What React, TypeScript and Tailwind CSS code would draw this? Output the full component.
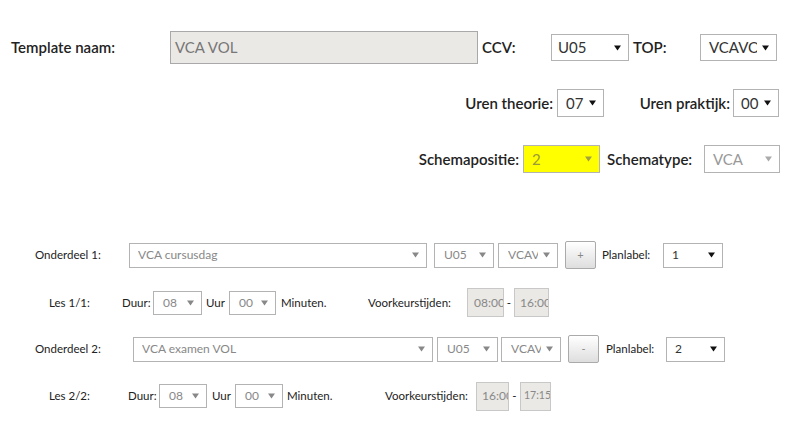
import React from 'react'

type SelProps = {
  w: string
  h: string
  value: string
  text?: string
  arrow?: string
  bg?: string
  size?: string
  pl?: string
}

const Arrow = ({ color }: { color: string }) => (
  <svg width="7" height="6" viewBox="0 0 7 6" className="shrink-0">
    <path d="M0 0.5 L7 0.5 L3.5 5.5 Z" fill={color} />
  </svg>
)

const Select = ({ w, h, value, text = 'text-[#333]', arrow = '#111', bg = 'bg-white', size = 'text-[15px]', pl = 'pl-[6px]' }: SelProps) => (
  <div className={`${w} ${h} ${bg} flex items-center border border-[#b3b3b3] ${pl} pr-[7px] font-normal`}>
    <div className={`flex-1 mr-[5px] overflow-hidden whitespace-nowrap ${text} ${size}`}>{value}</div>
    <Arrow color={arrow} />
  </div>
)

const TimeBox = ({ w, value, pl = 'pl-[5px]', size = 'text-[12px]' }: { w: string; value: string; pl?: string; size?: string }) => (
  <div className={`${w} h-[29px] flex items-center overflow-hidden whitespace-nowrap border border-[#c8c8c8] bg-[#ebe9e5] ${pl} ${size} text-[#888]`}>
    {value}
  </div>
)

const Btn = ({ label }: { label: string }) => (
  <div className="w-[31px] h-[28px] flex items-center justify-center rounded-[2px] border border-[#aaa] bg-gradient-to-b from-white to-[#dedede] text-[11px] text-[#888]">
    {label}
  </div>
)

export default function App() {
  return (
    <div className="w-[800px] h-[434px] overflow-hidden bg-white pt-[31px] font-['Lato','Noto_Sans',sans-serif] text-[#222]">
      {/* row 1 */}
      <div className="flex items-center h-[33px] text-[15px] font-semibold">
        <div className="ml-[11px] w-[159px]">Template naam:</div>
        <div className="w-[308px] h-[33px] flex items-center border border-[#a9a9a9] bg-[#ebe9e5] pl-[4px] text-[15px] font-normal text-[#777]">
          VCA VOL
        </div>
        <div className="ml-[4px] w-[69px]">CCV:</div>
        <Select w="w-[78px]" h="h-[27px]" value="U05" />
        <div className="ml-[4px] w-[67px]">TOP:</div>
        <Select w="w-[77px]" h="h-[27px]" value="VCAVOL" pl="pl-[8px]" />
      </div>

      {/* row 2 */}
      <div className="mt-[25px] flex items-center h-[28px] text-[15px] font-semibold">
        <div className="ml-[440px] w-[117px] pr-[4px] text-right">Uren theorie:</div>
        <Select w="w-[47px]" h="h-[28px]" value="07" pl="pl-[8px]" />
        <div className="w-[129px] pr-[3px] text-right">Uren praktijk:</div>
        <Select w="w-[46px]" h="h-[28px]" value="00" pl="pl-[7px]" />
      </div>

      {/* row 3 */}
      <div className="mt-[28px] flex items-center h-[28px] text-[15px] font-semibold">
        <div className="ml-[400px] w-[123px] pr-[4px] text-right">Schemapositie:</div>
        <Select w="w-[77px]" h="h-[28px]" value="2" bg="bg-[#ffff00]" text="text-[#9a9a3a]" arrow="#a0a040" pl="pl-[8px]" />
        <div className="w-[104px] pl-[7px]">Schematype:</div>
        <Select w="w-[76px]" h="h-[28px]" value="VCA" text="text-[#999]" arrow="#aaa" pl="pl-[8px]" />
      </div>

      {/* onderdeel 1 */}
      <div className="mt-[68px] flex items-center h-[28px] text-[11.5px]">
        <div className="ml-[35px] w-[94px]">Onderdeel 1:</div>
        <Select w="w-[298px]" h="h-[25px]" value="VCA cursusdag" text="text-[#888]" arrow="#888" size="text-[12px]" pl="pl-[8px]" />
        <div className="ml-[7px]">
          <Select w="w-[60px]" h="h-[25px]" value="U05" text="text-[#888]" arrow="#888" size="text-[12px]" pl="pl-[9px]" />
        </div>
        <div className="ml-[4px]">
          <Select w="w-[60px]" h="h-[25px]" value="VCAVOL" text="text-[#888]" arrow="#888" size="text-[12px]" pl="pl-[9px]" />
        </div>
        <div className="ml-[7px]">
          <Btn label="+" />
        </div>
        <div className="ml-[6px] w-[61px]">Planlabel:</div>
        <Select w="w-[60px]" h="h-[25px]" value="1" size="text-[12px]" pl="pl-[8px]" />
      </div>

      {/* les 1/1 */}
      <div className="mt-[19px] flex items-center h-[29px] text-[11.5px]">
        <div className="ml-[49px] w-[73px]">Les 1/1:</div>
        <div className="w-[31px]">Duur:</div>
        <Select w="w-[49px]" h="h-[24px]" value="08" text="text-[#888]" arrow="#888" size="text-[12px]" pl="pl-[9px]" />
        <div className="w-[27px] pl-[4px]">Uur</div>
        <Select w="w-[47px]" h="h-[24px]" value="00" text="text-[#888]" arrow="#888" size="text-[12px]" pl="pl-[9px]" />
        <div className="w-[92px] pl-[5px]">Minuten.</div>
        <div className="w-[99px] whitespace-nowrap">Voorkeurstijden:</div>
        <TimeBox w="w-[37px]" value="08:00" pl="pl-[6px]" />
        <div className="w-[10px] text-center">-</div>
        <TimeBox w="w-[35px]" value="16:00" />
      </div>

      {/* onderdeel 2 */}
      <div className="mt-[18px] flex items-center h-[28px] text-[11.5px]">
        <div className="ml-[35px] w-[98px]">Onderdeel 2:</div>
        <Select w="w-[300px]" h="h-[25px]" value="VCA examen VOL" text="text-[#888]" arrow="#888" size="text-[12px]" pl="pl-[8px]" />
        <div className="ml-[4px]">
          <Select w="w-[61px]" h="h-[25px]" value="U05" text="text-[#888]" arrow="#888" size="text-[12px]" pl="pl-[9px]" />
        </div>
        <div className="ml-[3px]">
          <Select w="w-[60px]" h="h-[25px]" value="VCAVOL" text="text-[#888]" arrow="#888" size="text-[12px]" pl="pl-[9px]" />
        </div>
        <div className="ml-[7px]">
          <Btn label="-" />
        </div>
        <div className="ml-[7px] w-[60px]">Planlabel:</div>
        <Select w="w-[59px]" h="h-[25px]" value="2" size="text-[12px]" pl="pl-[8px]" />
      </div>

      {/* les 2/2 */}
      <div className="mt-[19px] flex items-center h-[28px] text-[11.5px]">
        <div className="ml-[49px] w-[79px]">Les 2/2:</div>
        <div className="w-[31px]">Duur:</div>
        <Select w="w-[48px]" h="h-[24px]" value="08" text="text-[#888]" arrow="#888" size="text-[12px]" pl="pl-[9px]" />
        <div className="w-[28px] pl-[5px]">Uur</div>
        <Select w="w-[48px]" h="h-[24px]" value="00" text="text-[#888]" arrow="#888" size="text-[12px]" pl="pl-[9px]" />
        <div className="w-[102px] pl-[4px]">Minuten.</div>
        <div className="w-[91px] whitespace-nowrap">Voorkeurstijden:</div>
        <TimeBox w="w-[33px]" value="16:00" />
        <div className="w-[11px] text-center">-</div>
        <TimeBox w="w-[31px]" value="17:15" pl="pl-[3px]" size="text-[10.5px]" />
      </div>
    </div>
  )
}
